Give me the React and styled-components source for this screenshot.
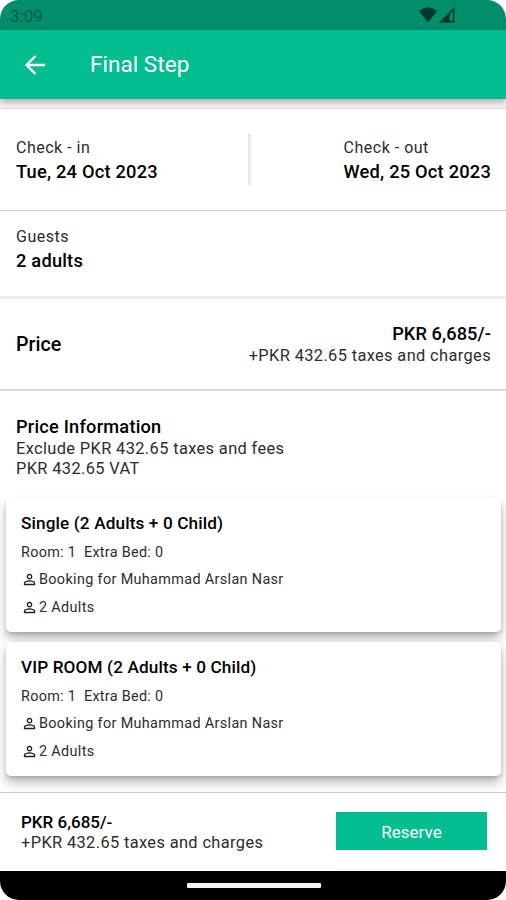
import React from "react";
import styled, { createGlobalStyle } from "styled-components";

const GlobalStyle = createGlobalStyle`
  * {
    box-sizing: border-box;
  }
  body {
    margin: 0;
    background: #fff;
    font-family: Roboto, "Liberation Sans", sans-serif;
    color: #000;
  }
`;

const Phone = styled.div`
  display: flex;
  flex-direction: column;
  width: 506px;
  height: 900px;
  overflow: hidden;
  border-radius: 19px;
  background: #fff;
`;

const StatusBar = styled.div`
  flex: none;
  display: flex;
  align-items: center;
  justify-content: space-between;
  height: 30px;
  padding: 2px 51px 0 10px;
  background: #028e6b;
  color: #035a45;
`;

const StatusIcons = styled.div`
  display: flex;
  gap: 2px;
  margin-top: -2px;
`;

const AppBar = styled.header`
  flex: none;
  position: relative;
  display: flex;
  align-items: center;
  gap: 43px;
  height: 69px;
  padding: 0 23px;
  background: #02bd90;
  color: #fff;
  box-shadow: 0 3px 7px rgba(60, 30, 40, 0.35);
`;

const Text = styled.div`
  font-size: ${(props) => props.$size || 16}px;
  line-height: ${(props) => props.$line || 20}px;
  font-weight: ${(props) => props.$weight || 400};
  letter-spacing: ${(props) => props.$spacing || 0}px;
  color: ${(props) => props.$color || "inherit"};
  white-space: pre;
`;

const Heading = styled(Text)`
  font-weight: 500;
`;

const Note = styled(Text)`
  color: #2c2c2c;
`;

const Divider = styled.div`
  flex: none;
  height: ${(props) => props.$height || 1}px;
  background: ${(props) => props.$color || "#cacaca"};
`;

const Section = styled.section`
  flex: none;
  display: flex;
  justify-content: space-between;
  height: ${(props) => props.$height}px;
  padding: ${(props) => props.$top}px 15px 0 16px;
`;

const Separator = styled.div`
  width: 3px;
  height: 51px;
  margin: -3px 3px 0 0;
  background: #e8e8e8;
`;

const PriceColumn = styled.div`
  display: flex;
  flex-direction: column;
  align-items: flex-end;
`;

const PriceInfo = styled.section`
  flex: none;
  height: 107px;
  padding: 25px 16px 0;
`;

const RoomList = styled.div`
  flex: none;
  display: flex;
  flex-direction: column;
  gap: 10px;
  height: 294px;
  padding: 0 5px 0 6px;
  clip-path: inset(-10px 0 0 0);
`;

const RoomCard = styled.article`
  flex: none;
  height: 134px;
  padding: 15px 15px 0;
  border-radius: 5px;
  background: #fff;
  box-shadow: 0 7px 12px rgba(0, 0, 0, 0.24), 0 3px 5px -1px rgba(0, 0, 0, 0.2);
`;

const GuestList = styled.div`
  display: flex;
  flex-direction: column;
  gap: 8px;
  margin-top: -2px;
`;

const GuestRow = styled.div`
  display: flex;
  align-items: center;
  gap: 1px;
  height: 20px;

  svg {
    margin-top: -1px;
  }
`;

const Footer = styled.footer`
  flex: none;
  display: flex;
  justify-content: space-between;
  height: 78px;
  padding: 19px 19px 0 21px;
`;

const ReserveButton = styled.button`
  display: flex;
  align-items: center;
  justify-content: center;
  width: 151px;
  height: 38px;
  padding: 1px 0 0;
  border: 0;
  background: #02bd90;
  color: #fff;
  font-family: inherit;
`;

const NavBar = styled.div`
  flex: 1;
  display: flex;
  justify-content: center;
  padding: 12px 0 0 1px;
  background: #000;
`;

const NavHandle = styled.div`
  width: 134px;
  height: 5px;
  border-radius: 1px;
  background: #f4f4f4;
`;

const PersonIcon = () => (
  <svg width="17" height="17" viewBox="0 0 24 24" fill="#222">
    <path d="M12 5.9a2.1 2.1 0 1 1 0 4.2 2.1 2.1 0 0 1 0-4.2m0 9c2.97 0 6.1 1.46 6.1 2.1v1.1H5.9V17c0-.64 3.13-2.1 6.1-2.1M12 4C9.79 4 8 5.79 8 8s1.79 4 4 4 4-1.79 4-4-1.79-4-4-4m0 9c-2.67 0-8 1.34-8 4v3h16v-3c0-2.66-5.33-4-8-4" />
  </svg>
);

const BackIcon = () => (
  <svg width="24" height="24" viewBox="0 0 24 24" fill="none">
    <path
      d="M22 12H4M12.5 3L3.5 12l9 9"
      stroke="#fff"
      strokeWidth="2.4"
    />
  </svg>
);

const WifiIcon = () => (
  <svg width="18" height="16" viewBox="0 0 18 16">
    <path d="M0 4Q9-3.4 18 4L9 15.5z" fill="#03382b" />
  </svg>
);

const SignalIcon = () => (
  <svg width="16" height="16" viewBox="0 0 16 16">
    <path d="M0 15.5L15.5 0v15.5z" fill="#03382b" />
    <path d="M10.8 7l3-3v10h-3z" fill="#028e6b" />
  </svg>
);

const rooms = [
  { name: "Single (2 Adults + 0 Child)", guest: "Muhammad Arslan Nasr" },
  { name: "VIP ROOM (2 Adults + 0 Child)", guest: "Muhammad Arslan Nasr" },
];

const Stay = ({ label, date }) => (
  <div>
    <Note $line={22} $spacing={0.5}>
      {label}
    </Note>
    <Heading $size={18.3} $line={26} $spacing={0.2}>
      {date}
    </Heading>
  </div>
);

const Room = ({ name, guest }) => (
  <RoomCard>
    <Heading $size={17.2} $spacing={0.12}>
      {name}
    </Heading>
    <Note $size={14.4} $line={39} $spacing={0.3}>
      Room: 1{"  "}Extra Bed: 0
    </Note>
    <GuestList>
      <GuestRow>
        <PersonIcon />
        <Note $size={14.4} $spacing={0.35}>
          Booking for {guest}
        </Note>
      </GuestRow>
      <GuestRow>
        <PersonIcon />
        <Note $size={14.4} $spacing={0.35}>
          2 Adults
        </Note>
      </GuestRow>
    </GuestList>
  </RoomCard>
);

const App = () => {
  return (
    <>
      <GlobalStyle />
      <Phone>
        <StatusBar>
          <Text $size={17}>3:09</Text>
          <StatusIcons>
            <WifiIcon />
            <SignalIcon />
          </StatusIcons>
        </StatusBar>
        <AppBar>
          <BackIcon />
          <Text $size={22.6} $line={30}>
            Final Step
          </Text>
        </AppBar>
        <Divider $height={9} $color="#f6f5f5" />
        <Divider $color="#dcdcdc" />
        <Section $height={101} $top={28}>
          <Stay label="Check - in" date="Tue, 24 Oct 2023" />
          <Separator />
          <Stay label="Check - out" date="Wed, 25 Oct 2023" />
        </Section>
        <Divider />
        <Section $height={85} $top={15}>
          <Stay label="Guests" date="2 adults" />
        </Section>
        <Divider $height={3} $color="#ebebeb" />
        <Section $height={90} $top={25}>
          <Heading $size={19.6} $line={42}>
            Price
          </Heading>
          <PriceColumn>
            <Heading $size={18.2} $spacing={0.1}>
              PKR 6,685/-
            </Heading>
            <Note $size={16.4} $line={23} $spacing={0.37}>
              +PKR 432.65 taxes and charges
            </Note>
          </PriceColumn>
        </Section>
        <Divider $height={2} $color="#dcdcdc" />
        <PriceInfo>
          <Heading $size={18.2} $line={22} $spacing={0.22}>
            Price Information
          </Heading>
          <Note $size={16.4} $line={21} $spacing={0.37}>
            Exclude PKR 432.65 taxes and fees
          </Note>
          <Note $size={16.4} $spacing={0.37}>
            PKR 432.65 VAT
          </Note>
        </PriceInfo>
        <RoomList>
          {rooms.map((room) => (
            <Room key={room.name} {...room} />
          ))}
        </RoomList>
        <Divider />
        <Footer>
          <div>
            <Heading $size={17}>PKR 6,685/-</Heading>
            <Note $size={16.4} $line={21} $spacing={0.37}>
              +PKR 432.65 taxes and charges
            </Note>
          </div>
          <ReserveButton>
            <Text $size={17}>Reserve</Text>
          </ReserveButton>
        </Footer>
        <NavBar>
          <NavHandle />
        </NavBar>
      </Phone>
    </>
  );
};

export default App;
